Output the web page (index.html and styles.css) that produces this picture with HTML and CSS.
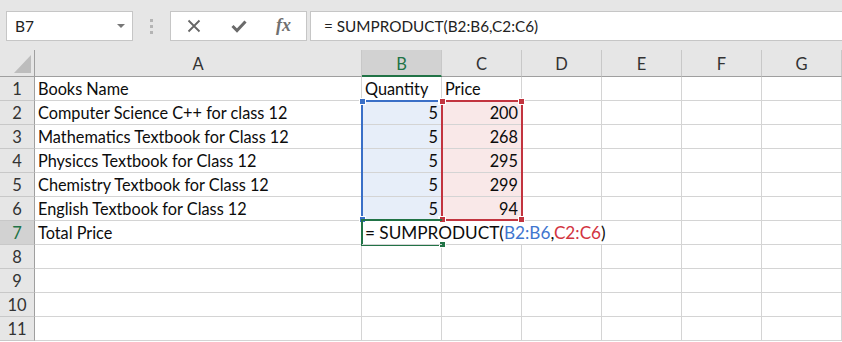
FILE: index.html
```html
<!DOCTYPE html>
<html lang="en">
<head>
    <meta charset="UTF-8">
    <title>SUMPRODUCT</title>
    <link rel="stylesheet" href="styles.css">
</head>
<body>
<header class="toolbar">
    <div class="name-box">
        <span>B7</span>
        <span class="drop"></span>
    </div>
    <div class="grip"><i></i><i></i><i></i></div>
    <div class="fx-buttons">
        <svg class="btn-x" width="14" height="14" viewBox="0 0 14 14">
            <path d="M1.5 1.5 L12.5 12.5 M12.5 1.5 L1.5 12.5" stroke="#666" stroke-width="1.8" fill="none"/>
        </svg>
        <svg class="btn-ok" width="16" height="14" viewBox="0 0 16 14">
            <path d="M1.5 7 L6 11.5 L14.5 2.5" stroke="#6a6a6a" stroke-width="3" fill="none"/>
        </svg>
        <span class="btn-fx">fx</span>
    </div>
    <div class="formula-bar">= SUMPRODUCT(B2:B6,C2:C6)</div>
</header>

<section class="sheet">
    <div class="grid">
        <div class="corner"><span class="tri"></span></div>
        <div class="col-head">A</div>
        <div class="col-head active">B</div>
        <div class="col-head">C</div>
        <div class="col-head">D</div>
        <div class="col-head">E</div>
        <div class="col-head">F</div>
        <div class="col-head">G</div>

        <div class="row-head">1</div>
        <div class="cell">Books Name</div>
        <div class="cell">Quantity</div>
        <div class="cell">Price</div>
        <div class="cell"></div><div class="cell"></div><div class="cell"></div><div class="cell"></div>

        <div class="row-head">2</div>
        <div class="cell">Computer Science C++ for class 12</div>
        <div class="cell num blue">5</div>
        <div class="cell num red">200</div>
        <div class="cell"></div><div class="cell"></div><div class="cell"></div><div class="cell"></div>

        <div class="row-head">3</div>
        <div class="cell">Mathematics Textbook for Class 12</div>
        <div class="cell num blue">5</div>
        <div class="cell num red">268</div>
        <div class="cell"></div><div class="cell"></div><div class="cell"></div><div class="cell"></div>

        <div class="row-head">4</div>
        <div class="cell">Physiccs Textbook for Class 12</div>
        <div class="cell num blue">5</div>
        <div class="cell num red">295</div>
        <div class="cell"></div><div class="cell"></div><div class="cell"></div><div class="cell"></div>

        <div class="row-head">5</div>
        <div class="cell">Chemistry Textbook for Class 12</div>
        <div class="cell num blue">5</div>
        <div class="cell num red">299</div>
        <div class="cell"></div><div class="cell"></div><div class="cell"></div><div class="cell"></div>

        <div class="row-head">6</div>
        <div class="cell">English Textbook for Class 12</div>
        <div class="cell num blue">5</div>
        <div class="cell num red">94</div>
        <div class="cell"></div><div class="cell"></div><div class="cell"></div><div class="cell"></div>

        <div class="row-head active">7</div>
        <div class="cell">Total Price</div>
        <div class="cell overflow">= SUMPRODUCT(<span class="ref-b">B2:B6</span>,<span class="ref-c">C2:C6</span>)</div>
        <div class="cell no-line"></div>
        <div class="cell no-line"></div>
        <div class="cell"></div><div class="cell"></div><div class="cell"></div>

        <div class="row-head">8</div>
        <div class="cell"></div><div class="cell"></div><div class="cell"></div><div class="cell"></div><div class="cell"></div><div class="cell"></div><div class="cell"></div>
        <div class="row-head">9</div>
        <div class="cell"></div><div class="cell"></div><div class="cell"></div><div class="cell"></div><div class="cell"></div><div class="cell"></div><div class="cell"></div>
        <div class="row-head">10</div>
        <div class="cell"></div><div class="cell"></div><div class="cell"></div><div class="cell"></div><div class="cell"></div><div class="cell"></div><div class="cell"></div>
        <div class="row-head">11</div>
        <div class="cell"></div><div class="cell"></div><div class="cell"></div><div class="cell"></div><div class="cell"></div><div class="cell"></div><div class="cell"></div>
    </div>

    <!-- range highlights drawn over the grid -->
    <div class="range range-b">
        <i class="h tl"></i><i class="h tr"></i><i class="h bl"></i><i class="h br"></i>
    </div>
    <div class="range range-c">
        <i class="h tl"></i><i class="h tr"></i><i class="h bl"></i><i class="h br"></i>
    </div>
    <div class="selection"><i class="h br"></i></div>
</section>
</body>
</html>
```

FILE: styles.css
```css
body {
    margin: 0;
    width: 842px;
    height: 342px;
    overflow: hidden;
    background: #fff;
    font-family: "Lato", "Noto Sans", sans-serif;
    color: #111;
}

.toolbar {
    height: 50px;
    background: #e6e6e6;
    display: flex;
    align-items: flex-start;
    padding-top: 11px;
    box-sizing: border-box;
}

.name-box {
    margin-left: 6px;
    width: 127px;
    height: 30px;
    box-sizing: border-box;
    background: #fff;
    border: 1px solid #c6c6c6;
    display: flex;
    align-items: center;
    justify-content: space-between;
    padding: 0 7px 0 8px;
    font-size: 15.5px;
    color: #222;
}

.drop {
    width: 0;
    height: 0;
    border-left: 4px solid transparent;
    border-right: 4px solid transparent;
    border-top: 4px solid #777;
}

.grip {
    width: 37px;
    height: 30px;
    display: flex;
    flex-direction: column;
    align-items: center;
    justify-content: center;
    gap: 3px;
}

.grip i {
    width: 3px;
    height: 3px;
    background: #b4b4b4;
}

.fx-buttons {
    width: 137px;
    height: 30px;
    box-sizing: border-box;
    background: #fff;
    border: 1px solid #c6c6c6;
    display: flex;
    align-items: center;
    padding-left: 16px;
}

.btn-x {
    margin-right: 30px;
}

.btn-ok {
    margin-right: 29px;
}

.btn-fx {
    font-family: "Liberation Serif", serif;
    font-style: italic;
    font-weight: bold;
    font-size: 18px;
    color: #707070;
    margin-top: -2px;
}

.formula-bar {
    flex: 1;
    margin-left: 3px;
    height: 30px;
    box-sizing: border-box;
    background: #fff;
    border: 1px solid #c6c6c6;
    border-right: none;
    padding-left: 13px;
    font-size: 15.3px;
    line-height: 28px;
    color: #222;
}

.sheet {
    position: relative;
}

.grid {
    display: grid;
    grid-template-columns: 35px 327px repeat(6, 80px);
    grid-template-rows: 27px repeat(11, 24px);
}

.corner {
    background: #e6e6e6;
    border-right: 1px solid #9f9f9f;
    border-bottom: 1px solid #9f9f9f;
    box-sizing: border-box;
    position: relative;
}

.tri {
    position: absolute;
    right: 3px;
    bottom: 3px;
    width: 0;
    height: 0;
    border-left: 17px solid transparent;
    border-bottom: 18px solid #bdbdbd;
}

.col-head {
    background: #e6e6e6;
    border-right: 1px solid #c8c8c8;
    border-bottom: 1px solid #9f9f9f;
    box-sizing: border-box;
    display: flex;
    align-items: center;
    justify-content: center;
    padding-top: 2px;
    font-size: 16.5px;
    color: #333;
}

.col-head.active {
    background: #d2d2d2;
    color: #217346;
    border-bottom: 2px solid #217346;
    padding-top: 3px;
}

.row-head {
    background: #e6e6e6;
    border-right: 1px solid #9f9f9f;
    border-bottom: 1px solid #c8c8c8;
    box-sizing: border-box;
    display: flex;
    align-items: center;
    justify-content: center;
    padding-top: 1px;
    font-size: 16.5px;
    color: #333;
}

.row-head.active {
    background: #d2d2d2;
    color: #217346;
}

.cell {
    border-right: 1px solid #d4d4d4;
    border-bottom: 1px solid #d4d4d4;
    box-sizing: border-box;
    padding: 1px 3px 0 3px;
    font-size: 16.3px;
    line-height: 22px;
    white-space: nowrap;
    color: #0c0c0c;
}

.cell.num {
    text-align: right;
}

.cell.blue {
    background: #e7eef9;
}

.cell.red {
    background: #f9e8e8;
}

.cell.overflow {
    overflow: visible;
    border-right: none;
    position: relative;
    z-index: 3;
    font-size: 17.2px;
}

.cell.no-line {
    border-right: none;
}

.ref-b {
    color: #3f76cf;
}

.ref-c {
    color: #d2343f;
}

.range,
.selection {
    position: absolute;
    box-sizing: border-box;
    border: 2px solid;
    z-index: 2;
}

.range-b {
    left: 361px;
    top: 50px;
    width: 82px;
    height: 121px;
    border-color: #3a6fc7;
}

.range-c {
    left: 441px;
    top: 50px;
    width: 82px;
    height: 121px;
    border-color: #c2343f;
}

.selection {
    left: 361px;
    top: 169px;
    width: 81px;
    height: 27px;
    border-color: #217346;
    border-right: none;
}

.h {
    position: absolute;
    width: 5px;
    height: 5px;
    border: 1px solid #fff;
    box-sizing: content-box;
}

.range-b .h { background: #3a6fc7; }
.range-c .h { background: #c2343f; }
.selection .h { background: #217346; }

.tl { left: -4px; top: -4px; }
.tr { right: -4px; top: -4px; }
.bl { left: -4px; bottom: -4px; }
.br { right: -4px; bottom: -4px; }
```
